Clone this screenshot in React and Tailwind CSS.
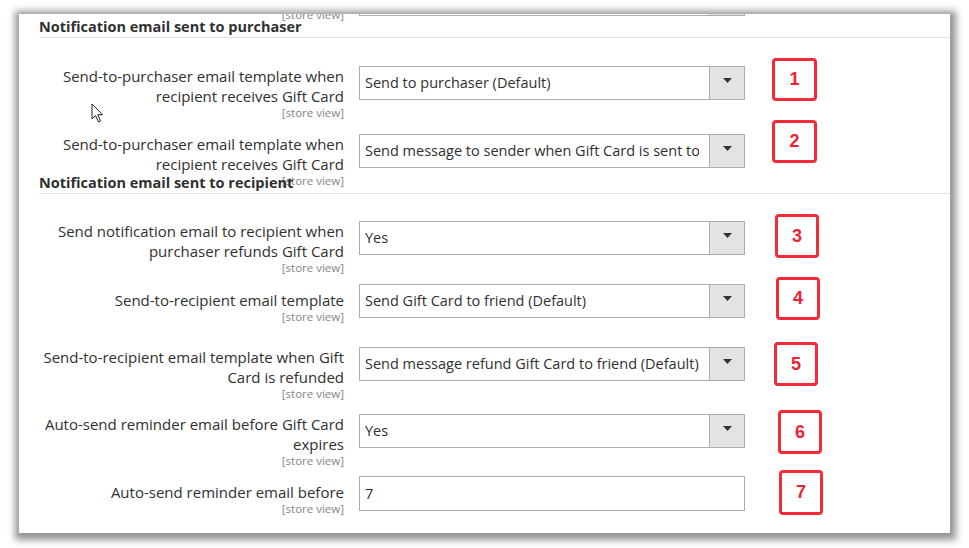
import React from 'react'

const FONT = { fontFamily: '"Open Sans", "Liberation Sans", sans-serif' }

function Caret() {
  return (
    <svg width="9" height="5" viewBox="0 0 9 5" className="block">
      <polygon points="0,0 9,0 4.5,5" fill="#333333" />
    </svg>
  )
}

function Badge({ n, className }) {
  return (
    <div
      className={`flex shrink-0 items-center justify-center rounded-[4px] border-[3px] border-[#f22a3a] text-[18px] font-bold text-[#ee2233] ${className}`}
      style={{ fontFamily: '"Liberation Sans", Arial, sans-serif' }}
    >
      {n}
    </div>
  )
}

function Select({ value, input }) {
  if (input) {
    return (
      <div className="ml-[15px] flex h-[35px] w-[386px] shrink-0 items-center border border-[#adadad] bg-white pl-[5px] text-[14.5px] text-[#303030]">
        {value}
      </div>
    )
  }
  return (
    <div className="ml-[15px] flex h-[34px] w-[386px] shrink-0 border border-[#adadad] bg-white">
      <div className="ml-[5px] mr-[10px] flex flex-1 items-center overflow-hidden whitespace-nowrap text-[14.5px] text-[#303030]">
        {value}
      </div>
      <div className="flex w-[35px] shrink-0 items-start justify-center border-l border-[#adadad] bg-[#e3e3e3] pt-[11px]">
        <Caret />
      </div>
    </div>
  )
}

function Row({ lines, value, input, badge, rowClass, labelClass, badgeClass }) {
  return (
    <div className={`flex items-start ${rowClass}`}>
      <div className={`w-[305px] shrink-0 text-right ${labelClass}`}>
        {lines.map((l, i) => (
          <div key={i} className="whitespace-nowrap text-[15px] leading-[20px] text-[#303030]">{l}</div>
        ))}
        <div className="text-[11.5px] leading-[13px] text-[#858585]">[store view]</div>
      </div>
      <Select value={value} input={input} />
      {badge && <Badge n={badge} className={badgeClass} />}
    </div>
  )
}

function Heading({ children, className }) {
  return (
    <div className={`relative mr-[-20px] border-b border-[#e3e3e3] text-[14.5px] font-bold leading-[20px] text-[#303030] ${className}`}>
      {children}
    </div>
  )
}

export default function App() {
  return (
    <div className="min-h-screen bg-white pt-[14px]" style={FONT}>
      <div className="relative ml-[19px] h-[519px] w-[931px] overflow-hidden bg-white pl-[20px] shadow-[1px_2px_7px_5px_rgba(0,0,0,0.42)]">
        <Row
          lines={['Send gift card email sender']}
          value="General Contact"
          rowClass="mt-[-32px]"
          labelClass="pt-[6px]"
        />
        <Heading className="mt-[-4px]">Notification email sent to purchaser</Heading>

        <Row
          lines={['Send-to-purchaser email template when', 'recipient receives Gift Card']}
          value="Send to purchaser (Default)"
          badge="1"
          rowClass="mt-[28px]"
          badgeClass="ml-[27px] mt-[-8px] h-[43px] w-[45px]"
        />
        <Row
          lines={['Send-to-purchaser email template when', 'recipient receives Gift Card']}
          value="Send message to sender when Gift Card is sent to friend (Default)"
          badge="2"
          rowClass="mt-[15px]"
          badgeClass="ml-[27px] mt-[-14px] h-[43px] w-[45px]"
        />
        <Heading className="mt-[-14px]">Notification email sent to recipient</Heading>

        <Row
          lines={['Send notification email to recipient when', 'purchaser refunds Gift Card']}
          value="Yes"
          badge="3"
          rowClass="mt-[27px]"
          badgeClass="ml-[30px] mt-[-7px] h-[44px] w-[44px]"
        />
        <Row
          lines={['Send-to-recipient email template']}
          value="Send Gift Card to friend (Default)"
          badge="4"
          rowClass="mt-[10px]"
          labelClass="pt-[6px]"
          badgeClass="ml-[31px] mt-[-7px] h-[43px] w-[44px]"
        />
        <Row
          lines={['Send-to-recipient email template when Gift', 'Card is refunded']}
          value="Send message refund Gift Card to friend (Default)"
          badge="5"
          rowClass="mt-[24px]"
          badgeClass="ml-[29px] mt-[-5px] h-[44px] w-[44px]"
        />
        <Row
          lines={['Auto-send reminder email before Gift Card', 'expires']}
          value="Yes"
          badge="6"
          rowClass="mt-[14px]"
          badgeClass="ml-[33px] mt-[-4px] h-[44px] w-[44px]"
        />
        <Row
          lines={['Auto-send reminder email before']}
          value="7"
          input
          badge="7"
          rowClass="mt-[9px]"
          labelClass="pt-[6px]"
          badgeClass="ml-[34px] mt-[-6px] h-[45px] w-[44px]"
        />

        <svg
          width="14"
          height="21"
          viewBox="0 0 14 21"
          className="absolute left-[72px] top-[89px]"
        >
          <path
            d="M1 1 L1 16 L4.5 12.5 L7.5 19 L9.5 18 L6.8 11.7 L11.5 11.7 Z"
            fill="#ffffff"
            stroke="#222222"
            strokeWidth="1"
            strokeLinejoin="round"
          />
        </svg>
      </div>
    </div>
  )
}
